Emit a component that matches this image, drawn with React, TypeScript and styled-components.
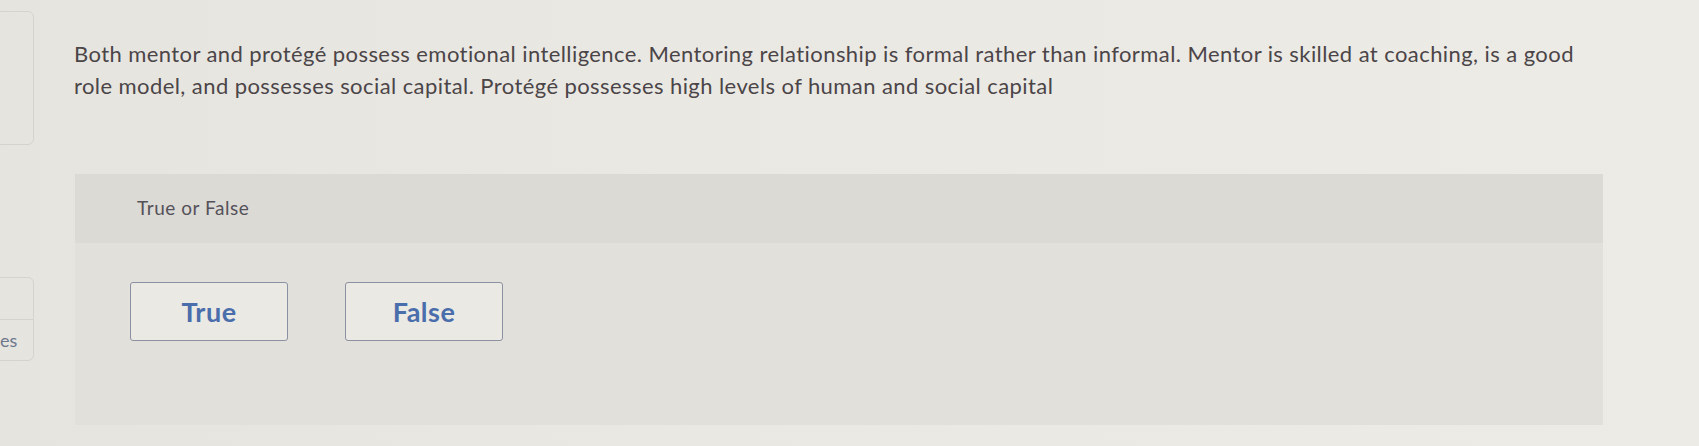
import React from "react";
import styled, { createGlobalStyle } from "styled-components";

const Global = createGlobalStyle`
  html, body { margin: 0; padding: 0; }
  body {
    background: linear-gradient(90deg, #e6e4df 0%, #eae8e3 40%, #edebe6 100%);
    font-family: Lato, "Open Sans", sans-serif;
    font-variant-ligatures: none;
    width: 1699px;
    height: 446px;
    overflow: hidden;
  }
`;

const Page = styled.div`
  display: flex;
  width: 1699px;
  height: 446px;
`;

const Rail = styled.div`
  width: 34px;
  flex: none;
  display: flex;
  flex-direction: column;
  padding-top: 11px;
  gap: 132px;
`;

const SideCard = styled.div<{ $h: number }>`
  margin-left: -12px;
  height: ${(p) => p.$h}px;
  border: 1px solid #d6d3cd;
  border-radius: 0 6px 6px 0;
  box-sizing: border-box;
  display: flex;
  flex-direction: column;
`;

const SideRow = styled.div<{ $last?: boolean }>`
  flex: 1;
  display: flex;
  align-items: center;
  padding-left: 11px;
  border-top: ${(p) => (p.$last ? "1px solid #d6d3cd" : "none")};
  font-size: 18px;
  color: #6d778c;
`;

const Main = styled.div`
  flex: 1;
  padding: 38px 0 0 40px;
`;

const Prompt = styled.p`
  margin: 0;
  width: 1525px;
  font-size: 22px;
  letter-spacing: 0.42px;
  line-height: 32px;
  color: #4b4548;
`;

const Panel = styled.section`
  margin-top: 72px;
  width: 1528px;
  margin-left: 1px;
  background: #e2e0db;
  height: 251px;
  display: flex;
  flex-direction: column;
`;

const PanelHead = styled.div`
  height: 69px;
  box-sizing: border-box;
  background: #dcdad5;
  padding: 21px 0 0 62px;
  font-size: 19px;
  letter-spacing: 0.55px;
  line-height: 25px;
  color: #55515a;
`;

const Choices = styled.div`
  display: flex;
  gap: 57px;
  padding: 39px 0 0 55px;
`;

const Choice = styled.button`
  width: 158px;
  height: 59px;
  box-sizing: border-box;
  background: #ebe9e4;
  border: 1.5px solid #8c90a3;
  border-radius: 3px;
  font-family: Lato, "Open Sans", sans-serif;
  font-weight: 700;
  font-size: 27px;
  letter-spacing: 0.5px;
  color: #4a6dab;
  padding: 0;
  cursor: pointer;
`;

export default function App() {
  return (
    <Page>
      <Global />
      <Rail>
        <SideCard $h={134} />
        <SideCard $h={84}>
          <SideRow />
          <SideRow $last>es</SideRow>
        </SideCard>
      </Rail>
      <Main>
        <Prompt>
          Both mentor and protégé possess emotional intelligence. Mentoring relationship is formal rather than
          informal. Mentor is skilled at coaching, is a good role model, and possesses social capital. Protégé
          possesses high levels of human and social capital
        </Prompt>
        <Panel>
          <PanelHead>True or False</PanelHead>
          <Choices>
            <Choice>True</Choice>
            <Choice>False</Choice>
          </Choices>
        </Panel>
      </Main>
    </Page>
  );
}
